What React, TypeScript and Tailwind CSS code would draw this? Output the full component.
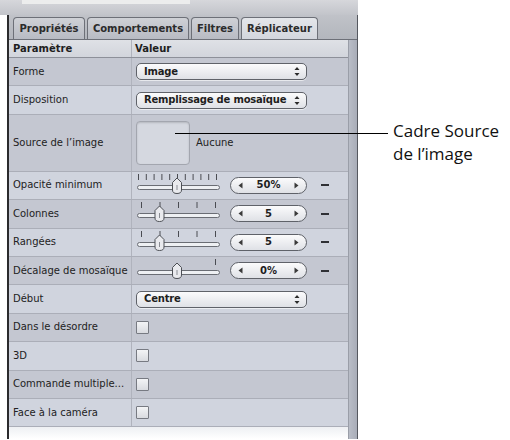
import React from "react";

const FONT = { fontFamily: '"DejaVu Sans", "Liberation Sans", sans-serif' };

function Arrows() {
  return (
    <svg width="6" height="11" viewBox="0 0 6 11">
      <path d="M3 1 L5.5 4 L0.5 4 Z" fill="#2a2a2a" />
      <path d="M3 10 L5.5 7 L0.5 7 Z" fill="#2a2a2a" />
    </svg>
  );
}

function Popup({ label }: { label: string }) {
  return (
    <div className="w-[171px] h-[17px] rounded-[5px] border border-[#5f6269] bg-gradient-to-b from-[#fbfbfc] to-[#dfe1e6] shadow-[0_1px_0_rgba(255,255,255,0.6)] flex items-center justify-between pl-[7px] pr-[6px]">
      <span className="text-[10px] font-bold text-[#1e1e1e] leading-none tracking-[-0.2px]">{label}</span>
      <Arrows />
    </div>
  );
}

function Slider({ ticks, thumb }: { ticks: number[]; thumb: number }) {
  return (
    <svg width="86" height="22" viewBox="0 0 86 22">
      {ticks.map((t, i) => (
        <line key={i} x1={t + 0.5} y1="1" x2={t + 0.5} y2="7" stroke="#4a4c52" strokeWidth="1" />
      ))}
      <rect x="1.5" y="12.5" width="82" height="4" rx="2" fill="#eef0f3" stroke="#6a6d74" />
      <path
        d={`M${thumb} 5 L${thumb + 4.5} 9.5 L${thumb + 4.5} 17 Q${thumb + 4.5} 20.5 ${thumb} 20.5 Q${thumb - 4.5} 20.5 ${thumb - 4.5} 17 L${thumb - 4.5} 9.5 Z`}
        fill="#e9eaee"
        stroke="#4d5056"
        strokeWidth="1"
      />
      <line x1={thumb} y1="12" x2={thumb} y2="17" stroke="#8a8d94" strokeWidth="1" />
    </svg>
  );
}

function Stepper({ value }: { value: string }) {
  return (
    <div className="w-[77px] h-[17px] rounded-full border border-[#5f6269] bg-gradient-to-b from-[#fbfbfc] to-[#dfe1e6] flex items-center justify-between px-[7px]">
      <svg width="5" height="7" viewBox="0 0 5 7">
        <path d="M0.5 3.5 L4.5 0.5 L4.5 6.5 Z" fill="#3a3a3a" />
      </svg>
      <span className="text-[10px] font-bold text-[#1e1e1e] leading-none">{value}</span>
      <svg width="5" height="7" viewBox="0 0 5 7">
        <path d="M4.5 3.5 L0.5 0.5 L0.5 6.5 Z" fill="#3a3a3a" />
      </svg>
    </div>
  );
}

function SliderRow({ ticks, thumb, value }: { ticks: number[]; thumb: number; value: string }) {
  return (
    <div className="flex items-center">
      <div className="mt-[-3px]">
        <Slider ticks={ticks} thumb={thumb} />
      </div>
      <div className="ml-[8px]">
        <Stepper value={value} />
      </div>
      <div className="ml-[14px] w-[8px] h-[2px] bg-[#2f3035]" />
    </div>
  );
}

function Checkbox() {
  return (
    <div className="w-[13px] h-[13px] border border-[#777a82] bg-gradient-to-b from-[#f3f4f6] to-[#d9dbe0] rounded-[1px]" />
  );
}

function Row({
  label,
  dark,
  h = "h-[28.4px]",
  children,
}: {
  label: string;
  dark: boolean;
  h?: string;
  children?: React.ReactNode;
}) {
  return (
    <div className={`flex ${h} border-b border-[#abaeb8] ${dark ? "bg-[#c4c7d1]" : "bg-[#d0d4de]"}`}>
      <div className="w-[123px] pl-[4px] flex items-center border-r border-[#b0b3bd] text-[10px] text-[#222] leading-none whitespace-nowrap">
        {label}
      </div>
      <div className="flex-1 pl-[4px] flex items-center">{children}</div>
    </div>
  );
}

const Tab = ({ label, w, active }: { label: string; w: string; active?: boolean }) => (
  <div
    className={`${w} h-[22px] rounded-t-[4px] border border-b-0 border-[#6d7078] flex items-center justify-center text-[10px] font-bold text-[#2b2b2b] ${
      active ? "bg-gradient-to-b from-[#e4e6ea] to-[#d3d6dd]" : "bg-gradient-to-b from-[#cfd1d6] to-[#b8bbc3]"
    }`}
  >
    {label}
  </div>
);

export default function App() {
  const tick5 = [5, 23.5, 42, 60.5, 79];
  const tick11 = [2, 9.8, 17.6, 25.4, 33.2, 41, 48.8, 56.6, 64.4, 72.2, 80];
  return (
    <div className="w-[510px] h-[440px] bg-white relative overflow-hidden" style={FONT}>
      <div className="w-[358px] flex flex-col">
        <div className="h-[15px] bg-gradient-to-b from-[#d6d7db] to-[#c2c4ca] pl-[22px]">
          <div className="w-[168px] h-[4px] bg-[#eceded]" />
        </div>
        <div className="ml-[7px] w-[351px] border-l-2 border-[#2b2b2d] border-r border-r-[#55585f] flex flex-col">
          <div className="h-[25px] bg-gradient-to-b from-[#c0c2c8] to-[#b3b6bd] flex items-end pl-[4px] gap-[2px] border-b border-[#6d7078]">
            <Tab label="Propriétés" w="w-[72px]" />
            <Tab label="Comportements" w="w-[102px]" />
            <Tab label="Filtres" w="w-[48px]" />
            <Tab label="Réplicateur" w="w-[77px]" active />
          </div>
          <div className="flex">
            <div className="w-[339px] flex flex-col">
              <div className="flex h-[18px] bg-gradient-to-b from-[#dfe1e6] to-[#d2d5dc] border-b border-[#8d9099]">
                <div className="w-[123px] pl-[4px] flex items-center border-r border-[#b0b3bd] text-[10px] font-bold text-[#1e1e1e]">
                  Paramètre
                </div>
                <div className="flex-1 pl-[3px] flex items-center text-[10px] font-bold text-[#1e1e1e]">Valeur</div>
              </div>
              <Row label="Forme" dark>
                <Popup label="Image" />
              </Row>
              <Row label="Disposition" dark={false}>
                <Popup label="Remplissage de mosaïque" />
              </Row>
              <Row label="Source de l’image" dark h="h-[57px]">
                <div className="w-[54px] h-[44px] rounded-[4px] border border-[#a3a6af] bg-[#d5d8e0] shadow-[inset_0_1px_2px_rgba(0,0,0,0.15)]" />
                <span className="ml-[6px] text-[10px] text-[#222]">Aucune</span>
              </Row>
              <Row label="Opacité minimum" dark={false}>
                <SliderRow ticks={tick11} thumb={41} value="50%" />
              </Row>
              <Row label="Colonnes" dark>
                <SliderRow ticks={tick5} thumb={23.5} value="5" />
              </Row>
              <Row label="Rangées" dark={false}>
                <SliderRow ticks={tick5} thumb={23.5} value="5" />
              </Row>
              <Row label="Décalage de mosaïque" dark>
                <SliderRow ticks={[79]} thumb={41} value="0%" />
              </Row>
              <Row label="Début" dark={false}>
                <Popup label="Centre" />
              </Row>
              <Row label="Dans le désordre" dark>
                <Checkbox />
              </Row>
              <Row label="3D" dark={false}>
                <Checkbox />
              </Row>
              <Row label="Commande multiple..." dark>
                <Checkbox />
              </Row>
              <Row label="Face à la caméra" dark={false}>
                <Checkbox />
              </Row>
              <div className="h-[12px] bg-gradient-to-b from-[#eef0f3] to-white" />
            </div>
            <div className="flex-1 bg-gradient-to-r from-[#b9bdc7] to-[#a9adb8] border-l border-[#9a9ea8]" />
          </div>
        </div>
      </div>

      <div className="absolute left-[175px] top-[133px] w-[213px] h-[1px] bg-black" />
      <div
        className="absolute left-[393px] top-[120px] text-[17px] leading-[22.5px] text-[#111]"
        style={{ fontFamily: '"Open Sans", "Noto Sans", sans-serif' }}
      >
        Cadre Source
        <br />
        de l’image
      </div>
    </div>
  );
}
